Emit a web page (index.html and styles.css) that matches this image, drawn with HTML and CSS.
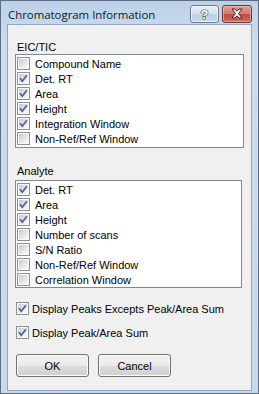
FILE: index.html
```html
<!DOCTYPE html>
<html lang="en">
<head>
    <meta charset="UTF-8">
    <title>Chromatogram Information</title>
    <link rel="stylesheet" href="styles.css">
</head>
<body>
    <div class="window">
        <div class="titlebar">
            <span class="title">Chromatogram Information</span>
            <div class="caption-btns">
                <div class="cap help">
                    <svg width="29" height="18" viewBox="0 0 29 18"><text x="14.5" y="14" text-anchor="middle">?</text></svg>
                </div>
                <div class="cap close">
                    <svg width="30" height="18" viewBox="0 0 30 18"><path d="M10 4h3l2 2.2 2-2.2h3l-3.5 4.5 3.5 4.5h-3l-2-2.2-2 2.2h-3l3.5-4.5z"/></svg>
                </div>
            </div>
        </div>

        <div class="client">
            <div class="group-label first">EIC/TIC</div>
            <div class="listbox wide">
                <div class="item"><span class="cb"></span>Compound Name</div>
                <div class="item"><span class="cb"><svg width="9" height="9" viewBox="0 0 9 9"><path d="M1 4.2l2.3 3 4.6-6"/></svg></span>Det. RT</div>
                <div class="item"><span class="cb"><svg width="9" height="9" viewBox="0 0 9 9"><path d="M1 4.2l2.3 3 4.6-6"/></svg></span>Area</div>
                <div class="item"><span class="cb"><svg width="9" height="9" viewBox="0 0 9 9"><path d="M1 4.2l2.3 3 4.6-6"/></svg></span>Height</div>
                <div class="item"><span class="cb"><svg width="9" height="9" viewBox="0 0 9 9"><path d="M1 4.2l2.3 3 4.6-6"/></svg></span>Integration Window</div>
                <div class="item"><span class="cb"></span>Non-Ref/Ref Window</div>
            </div>

            <div class="group-label second">Analyte</div>
            <div class="listbox narrow">
                <div class="item"><span class="cb"><svg width="9" height="9" viewBox="0 0 9 9"><path d="M1 4.2l2.3 3 4.6-6"/></svg></span>Det. RT</div>
                <div class="item"><span class="cb"><svg width="9" height="9" viewBox="0 0 9 9"><path d="M1 4.2l2.3 3 4.6-6"/></svg></span>Area</div>
                <div class="item"><span class="cb"><svg width="9" height="9" viewBox="0 0 9 9"><path d="M1 4.2l2.3 3 4.6-6"/></svg></span>Height</div>
                <div class="item"><span class="cb"></span>Number of scans</div>
                <div class="item"><span class="cb"></span>S/N Ratio</div>
                <div class="item"><span class="cb"></span>Non-Ref/Ref Window</div>
                <div class="item"><span class="cb"></span>Correlation Window</div>
            </div>

            <div class="option first-opt"><span class="cb"><svg width="9" height="9" viewBox="0 0 9 9"><path d="M1 4.2l2.3 3 4.6-6"/></svg></span>Display Peaks Excepts Peak/Area Sum</div>
            <div class="option"><span class="cb"><svg width="9" height="9" viewBox="0 0 9 9"><path d="M1 4.2l2.3 3 4.6-6"/></svg></span>Display Peak/Area Sum</div>

            <div class="buttons">
                <button class="btn">OK</button>
                <button class="btn">Cancel</button>
            </div>
        </div>
    </div>
</body>
</html>
```

FILE: styles.css
```css
body {
    margin: 0;
    background: #fff;
    font-family: "Liberation Sans", Arial, sans-serif;
    font-size: 11px;
    color: #000;
}
.window {
    width: 259px;
    height: 394px;
    box-sizing: border-box;
    border: 1px solid #5d6e84;
    padding: 0 6px 2px;
    background: linear-gradient(#bcd1e9, #cddcee 40px, #c9d9ec);
    display: flex;
    flex-direction: column;
}
.titlebar {
    height: 23px;
    display: flex;
    justify-content: space-between;
    align-items: flex-start;
}
.title {
    font-family: "Open Sans", "Noto Sans", sans-serif;
    font-size: 11.4px;
    line-height: 16px;
    padding: 6px 0 0 1px;
    color: #0c1a2c;
}
.caption-btns {
    display: flex;
    gap: 3px;
    padding-top: 4px;
}
.cap {
    height: 18px;
    box-sizing: border-box;
    border: 1px solid #6b7b90;
    border-radius: 3px;
    overflow: hidden;
    display: flex;
    align-items: center;
    justify-content: center;
}
.cap svg {
    display: block;
    flex: none;
}
.help {
    width: 29px;
    background: linear-gradient(#e6eef7, #d3e0ee 50%, #bccfe5 51%, #c9d9ec);
    box-shadow: inset 0 0 0 1px rgba(255, 255, 255, 0.6);
}
.help text {
    font-family: "Liberation Sans", sans-serif;
    font-weight: bold;
    font-size: 13px;
    fill: #fff;
    stroke: #3b4858;
    stroke-width: 1.2px;
    paint-order: stroke;
}
.close {
    width: 30px;
    border-color: #6e3434;
    background: linear-gradient(#e0a197, #d2776c 50%, #c14b3f 51%, #cd6a5c);
    box-shadow: inset 0 0 0 1px rgba(255, 220, 210, 0.5);
}
.close path {
    fill: #fff;
    stroke: #4a2320;
    stroke-width: 1;
    stroke-linejoin: round;
}
.client {
    flex: 1;
    border: 1px solid #93a6bd;
    background: #f0f0f0;
    display: flex;
    flex-direction: column;
    align-items: flex-start;
}
.group-label {
    line-height: 13px;
    margin-left: 9px;
}
.group-label.first {
    margin-top: 16px;
}
.group-label.second {
    margin-top: 17px;
    margin-bottom: 2px;
}
.listbox {
    margin-left: 7px;
    box-sizing: border-box;
    border: 1px solid #828790;
    background: #fff;
    padding-top: 1px;
    overflow: hidden;
}
.listbox.wide {
    width: 229px;
    height: 94px;
}
.listbox.narrow {
    width: 227px;
    height: 108px;
}
.item {
    height: 15px;
    display: flex;
    align-items: center;
    padding-left: 1px;
    white-space: nowrap;
}
.item .cb {
    margin-right: 5px;
}
.cb {
    width: 13px;
    height: 13px;
    box-sizing: border-box;
    border: 1px solid #8e8f8f;
    padding: 1px;
    background: linear-gradient(135deg, #c6c9ce, #e4e6e9 55%, #f9f9f9) content-box, #fcfcfc;
    flex: none;
}
.cb svg {
    display: block;
    overflow: visible;
}
.cb path {
    fill: none;
    stroke: #4b5f98;
    stroke-width: 1.7;
}
.option {
    display: flex;
    align-items: center;
    height: 13px;
    margin-left: 8px;
    margin-top: 11px;
    white-space: nowrap;
}
.option.first-opt {
    margin-top: 14px;
}
.option .cb {
    margin-right: 3px;
}
.buttons {
    display: flex;
    gap: 9px;
    margin: 15px 0 0 8px;
}
.btn {
    width: 73px;
    height: 23px;
    font-family: "Liberation Sans", Arial, sans-serif;
    font-size: 11px;
    color: #000;
    border: 1px solid #707070;
    border-radius: 3px;
    background: linear-gradient(#f2f2f2, #ebebeb 50%, #dddddd 51%, #cfcfcf);
    box-shadow: inset 0 0 0 1px #fcfcfc;
    padding: 0;
}
```
